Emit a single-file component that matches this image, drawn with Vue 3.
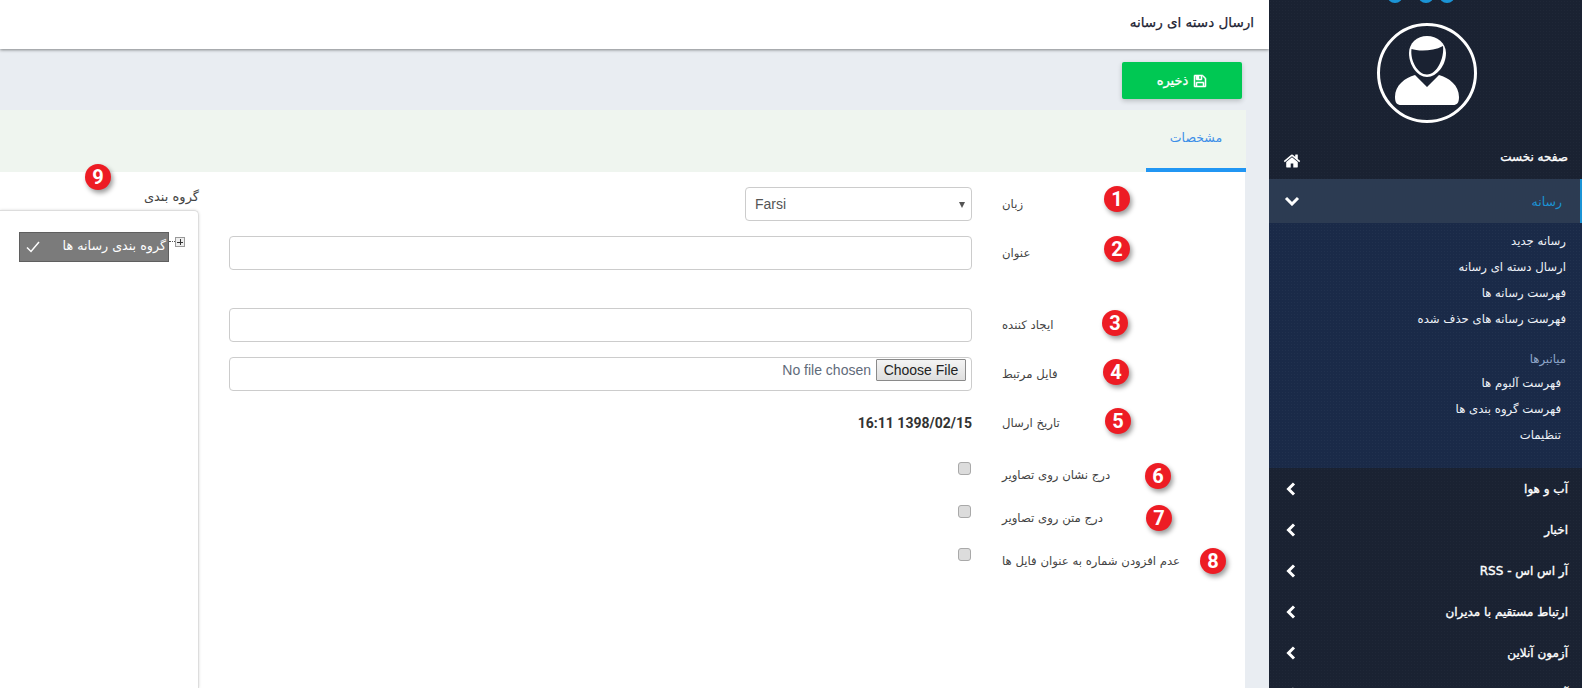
<script setup>
const menu = ['آب و هوا', 'اخبار', 'آر اس اس - RSS', 'ارتباط مستقیم با مدیران', 'آزمون آنلاین', 'آمار بازدید']
const sub1 = ['رسانه جدید', 'ارسال دسته ای رسانه', 'فهرست رسانه ها', 'فهرست رسانه های حذف شده']
const sub2 = ['فهرست آلبوم ها', 'فهرست گروه بندی ها', 'تنظیمات']
const checks = [
  { label: 'درج نشان روی تصاویر', n: 6, right: 74, top: 10 },
  { label: 'درج متن روی تصاویر', n: 7, right: 73, top: 9 },
  { label: 'عدم افزودن شماره به عنوان فایل ها', n: 8, right: 19, top: 9 }
]
const badgeStyle = (right, top) => ({ right: right + 'px', top: top + 'px' })
</script>

<template>
  <div class="app" dir="rtl">
    <aside class="sidebar">
      <div class="dots"><i></i><i></i><i></i></div>
      <svg class="avatar" viewBox="0 0 100 100" width="100" height="100">
        <circle cx="50" cy="50" r="48.500" fill="none" stroke="#fff" stroke-width="3" />
        <path fill="#fff" d="M50 13C60 13 69 20 69 30C69 42 60 54 50 54C40 54 32 42 32 30C32 20 40 13 50 13Z" />
        <path fill="#1a2232" d="M34.500 26C40 28 55 29 66 23C67.500 35 60 51.500 50 51.500C41 51.500 33 38 34.500 26Z" />
        <path fill="#fff" d="M18 74C18 62 28 55 38 52L50 64L62 52C72 55 82 62 82 74C82 80 80 82 76 82L24 82C20 82 18 80 18 74Z" />
      </svg>
      <div class="row home">
        <span>صفحه نخست</span>
        <svg viewBox="0 0 1792 1792" width="18" height="18" class="ico-home"><path fill="#fff" d="M1472 992v480q0 26-19 45t-45 19h-384v-384h-256v384h-384q-26 0-45-19t-19-45v-480q0-1 .5-3t.5-3l575-474 575 474q1 2 1 6zm223-69l-62 74q-8 9-21 11h-3q-13 0-21-7l-692-577-692 577q-12 8-24 7-13-2-21-11l-62-74q-8-10-7-23.5t11-21.5l719-599q32-26 76-26t76 26l244 204v-195q0-14 9-23t23-9h192q14 0 23 9t9 23v408l219 182q10 8 11 21.5t-7 23.5z" /></svg>
      </div>
      <div class="row active">
        <span>رسانه</span>
        <svg viewBox="0 0 16 10" width="16" height="10"><path d="M2 2L8 8L14 2" fill="none" stroke="#fff" stroke-width="3" /></svg>
      </div>
      <div class="submenu">
        <div v-for="s in sub1" :key="s" class="sub">{{ s }}</div>
        <div class="sub-title">میانبرها</div>
        <div v-for="s in sub2" :key="s" class="sub inset">{{ s }}</div>
      </div>
      <div v-for="m in menu" :key="m" class="row item">
        <span>{{ m }}</span>
        <svg viewBox="0 0 10 14" width="10" height="14"><path d="M8 1.500L2.500 7L8 12.500" fill="none" stroke="#fff" stroke-width="3" /></svg>
      </div>
    </aside>

    <main class="main">
      <header class="topbar"><h1>ارسال دسته ای رسانه</h1></header>
      <div class="toolbar">
        <button class="save" type="button">
          <svg viewBox="0 0 1792 1792" width="14" height="14"><path fill="#fff" stroke="#fff" stroke-width="70" d="M512 1536h768v-384h-768v384zm896 0h128v-896q0-14-10-38.500t-20-34.500l-281-281q-10-10-34-20t-39-10v416q0 40-28 68t-68 28h-576q-40 0-68-28t-28-68v-416h-128v1280h128v-416q0-40 28-68t68-28h832q40 0 68 28t28 68v416zm-384-928v-320q0-13-9.500-22.500t-22.500-9.500h-192q-13 0-22.500 9.500t-9.500 22.500v320q0 13 9.500 22.500t22.500 9.500h192q13 0 22.500-9.500t9.500-22.500zm640 32v928q0 40-28 68t-68 28h-1344q-40 0-68-28t-28-68v-1344q0-40 28-68t68-28h928q40 0 88 20t76 48l280 280q28 28 48 76t20 88z" /></svg>
          <span>ذخیره</span>
        </button>
      </div>
      <section class="panel">
        <div class="tabs"><div class="tab">مشخصات</div></div>
        <div class="body">
          <div class="form">
            <div class="frow gap15">
              <label>زبان</label>
              <div class="select-wrap">
                <select dir="ltr"><option>Farsi</option></select>
              </div>
              <b class="badge" :style="badgeStyle(115, -1)">1</b>
            </div>
            <div class="frow gap38">
              <label>عنوان</label>
              <input class="field" type="text" />
              <b class="badge" :style="badgeStyle(115, 0)">2</b>
            </div>
            <div class="frow gap15">
              <label>ایجاد کننده</label>
              <input class="field" type="text" />
              <b class="badge" :style="badgeStyle(117, 2)">3</b>
            </div>
            <div class="frow gap15">
              <label>فایل مرتبط</label>
              <input class="field file" type="file" />
              <b class="badge" :style="badgeStyle(116, 2)">4</b>
            </div>
            <div class="frow gap13">
              <label>تاریخ ارسال</label>
              <div class="date"><span dir="ltr">16:11 1398/02/15</span></div>
              <b class="badge" :style="badgeStyle(114, 2)">5</b>
            </div>
            <div v-for="c in checks" :key="c.n" class="frow check">
              <label>{{ c.label }}</label>
              <div class="check-cell"><input type="checkbox" /></div>
              <b class="badge" :style="badgeStyle(c.right, c.top)">{{ c.n }}</b>
            </div>
          </div>
          <div class="tree-col">
            <div class="tree-label">گروه بندی</div>
            <b class="badge nine">9</b>
            <div class="tree">
              <div class="node">
                <span class="plus"></span>
                <span class="conn"></span>
                <div class="node-box">
                  <span>گروه بندی رسانه ها</span>
                  <svg viewBox="0 0 14 12" width="14" height="12"><path d="M1 6.500L5 10.500L13 1" fill="none" stroke="#fff" stroke-width="1.500" /></svg>
                </div>
              </div>
            </div>
          </div>
        </div>
      </section>
    </main>
  </div>
</template>

<style>
html, body { margin: 0; padding: 0; overflow: hidden; }
</style>

<style scoped>
.app {
  display: flex;
  width: 1582px;
  height: 688px;
  overflow: hidden;
  font-family: "DejaVu Sans", "Liberation Sans", sans-serif;
  background: #e9edf2;
  color: #333;
}
.sidebar {
  flex: 0 0 313px;
  height: 688px;
  overflow: hidden;
  background-color: #1a2232;
  background-image: radial-gradient(rgba(255,255,255,.025) 1px, transparent 1px);
  background-size: 3px 3px;
  color: #fff;
  font-size: 12px;
  white-space: nowrap;
}
.dots { display: flex; height: 3px; overflow: hidden; padding-right: 127px; }
.dots i { display: block; width: 16px; height: 16px; border-radius: 50%; background: #1b94d6; margin-top: -13px; }
.dots i:nth-child(2) { margin-right: 5px; }
.dots i:nth-child(3) { margin-right: 15px; }
.avatar { display: block; margin: 20px 105px 0 0; }
.row { display: flex; align-items: center; justify-content: space-between; box-sizing: border-box; }
.home { height: 43px; margin-top: 13px; padding: 0 14px 0 14px; -webkit-text-stroke: .35px #fff; }
.home span { position: relative; top: -1px; }
.ico-home { flex: none; position: relative; top: 3px; }
.active { height: 44px; background: #2c3b52; border-right: 2px solid #1b94d6; padding: 0 18px 0 15px; color: #1b94d6; font-size: 12.500px; }
.submenu {
  height: 245px;
  box-sizing: border-box;
  padding: 5px 16px 0 0;
  background-color: #1a2a48;
  background-image: radial-gradient(rgba(255,255,255,.03) 1px, transparent 1px);
  background-size: 3px 3px;
  font-size: 11.700px;
  color: #eef2f8;
}
.sub { height: 26px; line-height: 26px; }
.sub.inset { padding-right: 5px; }
.sub-title { margin-top: 14px; height: 24px; line-height: 26px; color: #8ea6c8; }
.item { height: 41px; padding: 0 14px 0 17px; -webkit-text-stroke: .35px #fff; }

.main { flex: 1; min-width: 0; display: flex; flex-direction: column; height: 688px; overflow: hidden; }
.topbar {
  flex: none;
  height: 49px;
  box-sizing: border-box;
  background: #fff;
  box-shadow: 0 1px 3px rgba(0,0,0,.45);
  display: flex;
  align-items: center;
  padding: 0 15px 6px 0;
  position: relative;
}
.topbar h1 { margin: 0; font-size: 13.500px; font-weight: 500; color: #1d2333; -webkit-text-stroke: .25px #1d2333; }
.toolbar { flex: none; padding: 13px 27px 0 0; height: 61px; box-sizing: border-box; }
.save {
  width: 120px;
  height: 37px;
  border: 0;
  border-radius: 2px;
  background: #00c853;
  color: #fff;
  font: 13px "DejaVu Sans", sans-serif;
  -webkit-text-stroke: .3px #fff;
  box-shadow: 0 2px 5px rgba(0,0,0,.2);
  display: flex;
  align-items: center;
  justify-content: center;
  gap: 5px;
  padding: 0;
}
.panel { flex: 1; margin-right: 23px; display: flex; flex-direction: column; min-height: 0; }
.tabs { flex: none; height: 62px; background: #eff5ef; display: flex; }
.tab {
  width: 100px;
  box-sizing: border-box;
  height: 62px;
  border-bottom: 4px solid #2196f3;
  color: #3d8fe8;
  font-size: 12.500px;
  text-align: center;
  line-height: 56px;
}
.body { flex: 1; display: flex; background: #fff; margin-right: 1px; min-height: 0; }
.form { flex: 0 0 1016px; box-sizing: border-box; padding-top: 15px; }
.frow { display: grid; grid-template-columns: 273px 743px; position: relative; min-height: 34px; align-items: center; }
.frow label { text-align: left; padding-left: 30px; font-size: 11.700px; color: #444; }
.gap15 { margin-bottom: 15px; }
.gap38 { margin-bottom: 38px; }
.gap13 { margin-bottom: 13px; }
.select-wrap { position: relative; width: 227px; height: 34px; }
.select-wrap::after {
  content: "";
  position: absolute;
  right: 7px;
  top: 15px;
  border-left: 3.500px solid transparent;
  border-right: 3.500px solid transparent;
  border-top: 6px solid #555;
}
select {
  appearance: none;
  width: 100%;
  height: 34px;
  box-sizing: border-box;
  border: 1px solid #ccc;
  border-radius: 4px;
  background: #fff;
  padding: 0 9px;
  font: 14px "Liberation Sans", sans-serif;
  color: #555;
  display: block;
}
.field {
  display: block;
  width: 743px;
  height: 34px;
  box-sizing: border-box;
  border: 1px solid #ccc;
  border-radius: 4px;
  background: #fff;
  margin: 0;
}
.file { padding: 1px 5px; font: 14px "Liberation Sans", sans-serif; color: #5f6b7a; }
.file::file-selector-button {
  width: 90px;
  height: 22px;
  font: 14px "Liberation Sans", sans-serif;
  color: #222;
  background: linear-gradient(#f4f4f4, #dedede);
  border: 1px solid #8a8a8a;
  border-radius: 1px;
  padding: 0;
  margin: 0 0 0 5px;
}
.date { text-align: right; font: bold 14px Roboto, "Liberation Sans", sans-serif; color: #333; }
.check { height: 43px; align-items: start; }
.check label { line-height: 44px; }
.check-cell { padding-top: 9px; height: 13px; }
.check-cell input {
  appearance: none;
  display: block;
  width: 13px;
  height: 13px;
  margin: 0 1px 0 0;
  background: #dcdcdc;
  border: 1px solid #a9a9a9;
  border-radius: 3px;
  box-sizing: border-box;
}
.badge {
  position: absolute;
  width: 26px;
  height: 26px;
  border-radius: 50%;
  background: #ed1c24;
  color: #fff;
  font: bold 20px/26px Roboto, sans-serif;
  text-align: center;
  box-shadow: 2px 3px 5px rgba(0,0,0,.4);
}
.tree-col { flex: 1; position: relative; padding: 16px 30px 0 0; display: flex; flex-direction: column; min-width: 0; }
.tree-label { font-size: 13px; color: #444; height: 22px; line-height: 18px; }
.nine { left: 85px; top: -8px; }
.tree {
  flex: 1;
  box-sizing: border-box;
  border: 1px solid #ddd;
  border-left: 0;
  border-bottom: 0;
  border-top-right-radius: 5px;
  box-shadow: 0 0 3px rgba(0,0,0,.15);
  padding: 21px 13px 0 0;
}
.node { display: flex; align-items: flex-start; }
.plus {
  flex: none;
  width: 10px;
  height: 10px;
  margin-top: 5px;
  box-sizing: border-box;
  border: 1px solid #999;
  background:
    linear-gradient(#333, #333) center / 6px 1px no-repeat,
    linear-gradient(#333, #333) center / 1px 6px no-repeat,
    #eee;
}
.conn { flex: none; width: 6px; margin-top: 9px; border-top: 1px dotted #555; }
.node-box {
  width: 150px;
  height: 30px;
  box-sizing: border-box;
  background: #7b7b7b;
  border: 1px solid #5f5f5f;
  color: #fff;
  font-size: 12.700px;
  display: flex;
  align-items: center;
  justify-content: space-between;
  padding: 0 2px 3px 0;
}
.node-box svg { flex: none; margin-left: 6px; margin-top: 3px; }
</style>
